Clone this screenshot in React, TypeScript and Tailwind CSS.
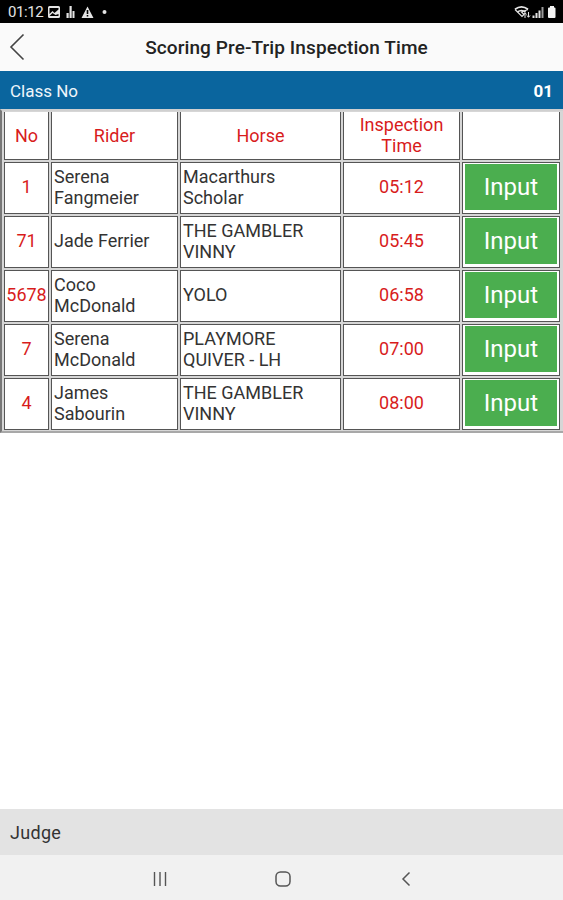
const entries = [
  { no: '1', rider: ['Serena', 'Fangmeier'], horse: ['Macarthurs', 'Scholar'], time: '05:12' },
  { no: '71', rider: ['Jade Ferrier'], horse: ['THE GAMBLER', 'VINNY'], time: '05:45' },
  { no: '5678', rider: ['Coco', 'McDonald'], horse: ['YOLO'], time: '06:58' },
  { no: '7', rider: ['Serena', 'McDonald'], horse: ['PLAYMORE', 'QUIVER - LH'], time: '07:00' },
  { no: '4', rider: ['James', 'Sabourin'], horse: ['THE GAMBLER', 'VINNY'], time: '08:00' },
]

const row = 'grid grid-cols-[45px_127px_161px_117px_98px] gap-x-[2px]'
const base = 'flex flex-col justify-center border-[#555] bg-white'
const head = `${base} border-x border-b pb-px`
const cell = `${base} border pb-[3px]`

function Lines({ items }: { items: string[] }) {
  return (
    <div className={`${cell} pl-[2px] text-left text-[#333] whitespace-nowrap`}>
      {items.map((text) => (
        <span key={text}>{text}</span>
      ))}
    </div>
  )
}

function StatusBar() {
  return (
    <div className="flex h-[23px] items-center justify-between bg-black pl-2 pr-[7px] pt-px text-[#e4e4e4]">
      <div className="flex items-center">
        <span className="w-[40px] text-[15px] leading-none tracking-[-0.4px]">01:12</span>
        <svg width="60" height="14" viewBox="0 0 60 14" fill="currentColor">
          <path fillRule="evenodd" d="M1.5 1h9a1.5 1.5 0 0 1 1.5 1.5v9a1.5 1.5 0 0 1-1.5 1.5h-9A1.5 1.5 0 0 1 0 11.5v-9A1.5 1.5 0 0 1 1.5 1zM1.500 3v6l3-3 2 2 4-3.500V3zM1.500 11h9V9l-3 1-3-2z" />
          <path d="M18.500 8h2.200v5h-2.200zM21.500 1h2.200v12h-2.200zM24.500 6h2v7h-2z" />
          <path fillRule="evenodd" d="M39.500 1.500 45.500 13h-12zM38.700 5v4h1.600V5zM38.700 10v1.600h1.600V10z" />
          <circle cx="56.500" cy="7" r="2" />
        </svg>
      </div>
      <svg width="42" height="14" viewBox="0 0 42 14">
        <path d="M1 4.300Q7.500-.500 14 4.300M3.500 7Q7.500 4 11.500 7" fill="none" stroke="currentColor" strokeWidth="1.700" />
        <path d="M1 4.500 8 11.500l2-2L7.500 7 14 4.500" fill="none" stroke="currentColor" strokeWidth="1.200" />
        <path d="M11 13V8M9.500 9.500 11 7.700l1.500 1.800M14.500 7v5M13 10.500l1.500 1.800 1.500-1.800" fill="none" stroke="currentColor" />
        <path d="M18.500 10.500h2V13h-2zM21.500 8h2v5h-2zM24.500 5.500h2V13h-2z" fill="currentColor" />
        <path d="M27.500 2h2v11h-2z" fill="#999" />
        <path d="M36 1h4v1.500h.500a1 1 0 0 1 1 1V12a1 1 0 0 1-1 1h-5.500a1 1 0 0 1-1-1V3.500a1 1 0 0 1 1-1h1z" fill="#f4f4f4" />
      </svg>
    </div>
  )
}

export default function App() {
  return (
    <div className="flex h-[900px] w-[563px] flex-col overflow-hidden bg-white font-['Roboto',sans-serif]">
      <StatusBar />
      <header className="grid h-[48px] grid-cols-[50px_1fr_40px] items-center bg-[#fafafa]">
        <svg width="16" height="28" viewBox="0 0 16 28" className="ml-[9px]" fill="none" stroke="#444" strokeWidth="1.600">
          <path d="M14.500 1.500 2 14l12.500 12.500" />
        </svg>
        <h1 className="pt-[3px] text-center text-[19px] font-medium tracking-[0.1px] text-[#222]">Scoring Pre-Trip Inspection Time</h1>
      </header>
      <div className="flex h-[38px] items-center justify-between bg-[#0a659e] px-[10px] pt-[3px] text-[17px] text-[#eef6fb]">
        <span>Class No</span>
        <span className="font-bold text-white">01</span>
      </div>

      <main className="flex h-[324px] flex-col gap-[2px] border-y-2 border-l-2 border-t-[#d0d0d0] border-b-[#a8a8a8] border-l-[#777] bg-[#d6d6d6] pt-px pl-[2px] text-[18px] leading-[21px]">
        <div className={`${row} h-[48px] text-center text-[#d81c1c]`}>
          <div className={head}>No</div>
          <div className={head}>Rider</div>
          <div className={head}>Horse</div>
          <div className={head}>
            <span>Inspection</span>
            <span>Time</span>
          </div>
          <div className={head} />
        </div>
        {entries.map((entry) => (
          <div key={entry.no} className={`${row} h-[52px] text-center`}>
            <div className={`${cell} items-center text-[#d81c1c]`}>{entry.no}</div>
            <Lines items={entry.rider} />
            <Lines items={entry.horse} />
            <div className={`${cell} text-[#d81c1c]`}>{entry.time}</div>
            <div className={`${base} border px-[2px] pt-px pb-[3px]`}>
              <button className="flex-1 bg-[#4bae4f] pt-px text-[24px] text-white">Input</button>
            </div>
          </div>
        ))}
      </main>

      <div className="flex-1" />
      <footer className="flex h-[46px] items-center bg-[#e3e3e3] pl-[10px] text-[18px] tracking-[0.3px] text-[#333]">Judge</footer>
      <nav className="flex h-[45px] items-center justify-center gap-[106px] bg-[#f1f1f1] pt-[3px] pl-[3px]">
        <svg width="16" height="16" viewBox="0 0 16 16" fill="none" stroke="#555" strokeWidth="1.400">
          <path d="M2.500 1v14M8 1v14M13.500 1v14" />
        </svg>
        <svg width="18" height="18" viewBox="0 0 18 18" fill="none" stroke="#555" strokeWidth="1.500">
          <rect x="2" y="2" width="14" height="14" rx="4.500" />
        </svg>
        <svg width="16" height="16" viewBox="0 0 16 16" fill="none" stroke="#555" strokeWidth="1.500">
          <path d="M11.500 1.500 5 8l6.500 6.500" />
        </svg>
      </nav>
    </div>
  )
}
